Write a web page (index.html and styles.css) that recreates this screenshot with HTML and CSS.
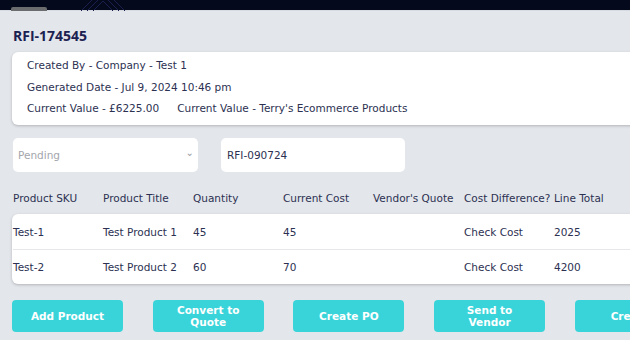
FILE: index.html
```html
<!DOCTYPE html>
<html>
<head>
<meta charset="utf-8">
<link rel="stylesheet" href="styles.css">
</head>
<body>
<div class="topbar">
  <div class="tab"></div>
  <svg class="deco" width="60" height="11" viewBox="0 0 60 11">
    <path d="M8 11 L30 -11 L52 11 M14 11 L30 -5 L46 11 M20 11 L30 1 L40 11" fill="none" stroke="#1b1f4d" stroke-width="1"/>
  </svg>
</div>
<main class="page">
  <h1 class="title">RFI-174545</h1>
  <section class="card info">
    <div class="line">Created By - Company - Test 1</div>
    <div class="line">Generated Date - Jul 9, 2024 10:46 pm</div>
    <div class="line values"><span>Current Value - £6225.00</span><span>Current Value - Terry's Ecommerce Products</span></div>
  </section>
  <div class="fields">
    <div class="field select"><span class="placeholder">Pending</span><span class="chev">⌄</span></div>
    <div class="field input">RFI-090724</div>
  </div>
  <div class="thead">
    <span>Product SKU</span><span>Product Title</span><span>Quantity</span><span>Current Cost</span><span>Vendor's Quote</span><span>Cost Difference?</span><span>Line Total</span>
  </div>
  <section class="card tbody">
    <div class="row"><span>Test-1</span><span>Test Product 1</span><span>45</span><span>45</span><span></span><span>Check Cost</span><span>2025</span></div>
    <div class="row"><span>Test-2</span><span>Test Product 2</span><span>60</span><span>70</span><span></span><span>Check Cost</span><span>4200</span></div>
  </section>
  <div class="actions">
    <button class="btn">Add Product</button>
    <button class="btn">Convert to<br>Quote</button>
    <button class="btn">Create PO</button>
    <button class="btn">Send to<br>Vendor</button>
    <button class="btn">Create</button>
  </div>
</main>
</body>
</html>
```
FILE: styles.css
```css
html, body {
  margin: 0;
  padding: 0;
  overflow: hidden;
  width: 630px;
  height: 340px;
  background: #e3e6eb;
  font-family: "DejaVu Sans", "Open Sans", sans-serif;
  color: #2c3152;
}
.topbar {
  height: 11px;
  background: #040a1b;
  position: relative;
  border-bottom: 1px solid #d7dae0;
  box-sizing: border-box;
}
.tab {
  position: absolute;
  left: 11px;
  top: 7px;
  width: 36px;
  height: 4px;
  background: #6b6c6e;
  border-radius: 2px 2px 0 0;
}
.deco {
  position: absolute;
  left: 73px;
  top: 0;
}
.page {
  padding: 0 0 0 12px;
  width: 700px;
}
.title {
  margin: 0;
  padding: 16px 0 0 1px;
  height: 25px;
  font-family: "Open Sans", sans-serif;
  font-size: 14px;
  line-height: 17px;
  font-weight: 700;
  color: #1b2150;
}
.card {
  background: #fff;
  border-radius: 6px;
  box-shadow: 0 1px 3px rgba(0,0,0,0.22);
}
.info {
  padding: 3px 15px 6px;
  height: 64px;
  font-size: 10.5px;
}
.line {
  line-height: 21.5px;
}
.values {
  display: flex;
  gap: 18px;
}
.fields {
  display: flex;
  gap: 23px;
  margin-top: 13px;
}
.field {
  width: 184px;
  height: 34px;
  background: #fff;
  border-radius: 5px;
  box-sizing: border-box;
  display: flex;
  align-items: center;
  font-size: 10.5px;
  padding: 0 6px;
}
.select {
  width: 185px;
  margin-left: 1px;
  justify-content: space-between;
  padding: 0 4px 0 5px;
}
.placeholder {
  color: #a4a6ad;
}
.chev {
  color: #9a9ca3;
  font-size: 10px;
  margin-top: -6px;
}
.thead, .row {
  display: grid;
  grid-template-columns: 90px 90px 90px 90px 91px 90px 90px;
  font-size: 10.5px;
  white-space: nowrap;
}
.thead {
  padding: 18px 0 8px 1px;
  line-height: 16px;
}
.tbody {
  padding: 0 0 0 1px;
}
.row {
  height: 35px;
  align-items: center;
}
.row + .row {
  border-top: 1px solid #e6e7ea;
  height: 34px;
}
.actions {
  display: flex;
  gap: 29.7px;
  margin-top: 16px;
}
.btn {
  width: 111px;
  height: 32px;
  flex: none;
  border: none;
  border-radius: 4px;
  background: #39d4d9;
  color: #fff;
  font-family: inherit;
  font-size: 10.5px;
  font-weight: 600;
  line-height: 12px;
  padding: 0;
}
```
